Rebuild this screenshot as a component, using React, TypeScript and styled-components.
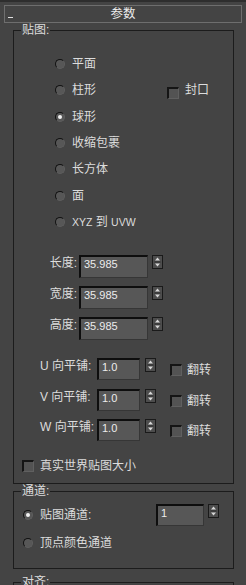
import React from "react";
import styled, { createGlobalStyle } from "styled-components";

const GlobalStyle = createGlobalStyle`
  html, body {
    margin: 0;
    padding: 0;
    background: #444444;
  }
  body {
    width: 246px;
    height: 585px;
    overflow: hidden;
    font-family: "Liberation Sans", "Noto Sans CJK SC", sans-serif;
    font-size: 12px;
    color: #dcdcdc;
  }
`;

const Page = styled.div`
  width: 246px;
  height: 585px;
  box-sizing: border-box;
  border-top: 2px solid #2e2e2e;
  padding-top: 3px;
  overflow: hidden;
`;

const RolloutHeader = styled.div`
  margin: 0 4px;
  height: 18px;
  box-sizing: border-box;
  border: 1px solid #6e6e6e;
  display: grid;
  grid-template-columns: 1fr auto 1fr;
  align-items: center;
`;

const Collapse = styled.span`
  width: 5px;
  height: 1px;
  margin: 6px 0 0 3px;
  background: #e0e0e0;
`;

const Title = styled.span`
  font-size: 12.5px;
  line-height: 14px;
  color: #ececec;
`;

const Group = styled.fieldset<{ $top?: number }>`
  margin: ${(p) => p.$top ?? 0}px 12px 0 13px;
  padding: 0;
  border: 1px solid #1c1c1c;
  min-inline-size: 0;
`;

const Legend = styled.legend`
  padding: 0 1px;
  margin-left: 7px;
  font-size: 12px;
  line-height: 14px;
  color: #dcdcdc;
`;

const Body = styled.div<{ $pad: string }>`
  display: flex;
  flex-direction: column;
  padding: ${(p) => p.$pad};
`;

const RadioList = styled.div`
  display: flex;
  flex-direction: column;
  padding-left: 41px;
`;

const RadioRow = styled.div<{ $h?: number }>`
  display: flex;
  align-items: center;
  height: ${(p) => p.$h ?? 26.3}px;
`;

const Radio = styled.span<{ $on?: boolean }>`
  flex: none;
  width: 10px;
  height: 10px;
  box-sizing: border-box;
  border-radius: 50%;
  border: 1px solid;
  border-color: #111 #5e5e5e #5e5e5e #111;
  background: #575757;
  display: inline-flex;
  align-items: center;
  justify-content: center;
  &::after {
    content: "";
    width: 4px;
    height: 4px;
    border-radius: 50%;
    background: ${(p) => (p.$on ? "#f2f2f2" : "transparent")};
  }
`;

const Text = styled.span<{ $gap?: number }>`
  margin-left: ${(p) => p.$gap ?? 7}px;
  line-height: 14px;
  white-space: nowrap;
`;

const Latin = styled.span`
  font-size: 10.5px;
`;

const Check = styled.span<{ $drop?: number }>`
  flex: none;
  width: 12px;
  height: 12px;
  box-sizing: border-box;
  border: 1px solid;
  border-width: 2px 1px 1px 2px;
  border-color: #151515 #606060 #606060 #151515;
  background: #535353;
  transform: translateY(${(p) => p.$drop ?? 0}px);
`;

const CapOption = styled.div`
  display: flex;
  align-items: center;
  margin-left: auto;
  margin-right: 24px;
`;

const DimList = styled.div`
  display: flex;
  flex-direction: column;
  gap: 8px;
  margin-top: 20px;
`;

const DimRow = styled.div`
  display: flex;
  align-items: flex-start;
  height: 23px;
`;

const DimLabel = styled.span<{ $w: number; $pad?: number }>`
  box-sizing: border-box;
  width: ${(p) => p.$w}px;
  padding-left: ${(p) => p.$pad ?? 0}px;
  padding-right: ${(p) => (p.$pad ? 0 : 2)}px;
  text-align: ${(p) => (p.$pad ? "left" : "right")};
  line-height: 16px;
  white-space: nowrap;
`;

const Field = styled.div<{ $w: number; $h: number }>`
  flex: none;
  width: ${(p) => p.$w}px;
  height: ${(p) => p.$h}px;
  box-sizing: border-box;
  border-style: solid;
  border-width: 2px 1px 1px 2px;
  border-color: #0e0e0e #363636 #363636 #0e0e0e;
  background: #575757;
  padding: 0 3px;
  font-family: "Liberation Sans", sans-serif;
  font-size: 11px;
  line-height: 15px;
  color: #ececec;
`;

const SpinBox = styled.div<{ $gap: number }>`
  flex: none;
  width: 11px;
  height: 14px;
  box-sizing: border-box;
  margin-left: ${(p) => p.$gap}px;
  border: 1px solid #1a1a1a;
  background: #4d4d4d;
  display: flex;
`;

const Spinner = ({ gap }: { gap: number }) => (
  <SpinBox $gap={gap}>
    <svg width="9" height="12" viewBox="0 0 9 12">
      <path d="M4.5 1.5 L7 4.5 L2 4.5 Z" fill="#d8d8d8" />
      <path d="M1.5 6 H7.5" stroke="#2a2a2a" strokeWidth="1" />
      <path d="M2 7.5 L7 7.5 L4.5 10.5 Z" fill="#d8d8d8" />
    </svg>
  </SpinBox>
);

const TileList = styled.div`
  display: flex;
  flex-direction: column;
  gap: 8.5px;
  margin-top: 18px;
`;

const TileRow = styled.div`
  display: flex;
  align-items: flex-start;
  height: 22px;
`;

const FlipOption = styled.div`
  display: flex;
  align-items: center;
  margin: 5px 0 0 14px;
`;

const WorldRow = styled.div`
  display: flex;
  align-items: center;
  height: 13px;
  margin-top: 18px;
  padding-left: 8px;
`;

const ChannelRow = styled.div<{ $top?: number }>`
  display: flex;
  align-items: center;
  height: 22px;
  margin-top: ${(p) => p.$top ?? 0}px;
`;

const ChannelField = styled.div`
  display: flex;
  align-items: flex-start;
  margin-left: auto;
  margin-right: 14px;
  height: 22px;
`;

const projections: { label: React.ReactNode; on?: boolean; cap?: boolean }[] = [
  { label: "平面" },
  { label: "柱形", cap: true },
  { label: "球形", on: true },
  { label: "收缩包裹" },
  { label: "长方体" },
  { label: "面" },
  {
    label: (
      <>
        <Latin>XYZ</Latin> 到 <Latin>UVW</Latin>
      </>
    ),
  },
];

const dims = ["长度:", "宽度:", "高度:"];
const tiles = ["U 向平铺:", "V 向平铺:", "W 向平铺:"];

export default function App() {
  return (
    <>
      <GlobalStyle />
      <Page>
        <RolloutHeader>
          <Collapse />
          <Title>参数</Title>
        </RolloutHeader>

        <Group>
          <Legend>贴图:</Legend>
          <Body $pad="14px 0 11px 0">
            <RadioList>
              {projections.map((p, i) => (
                <RadioRow key={i}>
                  <Radio $on={p.on} />
                  <Text>{p.label}</Text>
                  {p.cap && (
                    <CapOption>
                      <Check $drop={3} />
                      <Text $gap={6}>封口</Text>
                    </CapOption>
                  )}
                </RadioRow>
              ))}
            </RadioList>

            <DimList>
              {dims.map((d) => (
                <DimRow key={d}>
                  <DimLabel $w={65}>{d}</DimLabel>
                  <Field $w={69} $h={23}>35.985</Field>
                  <Spinner gap={4} />
                </DimRow>
              ))}
            </DimList>

            <TileList>
              {tiles.map((t) => (
                <TileRow key={t}>
                  <DimLabel $w={83} $pad={26}>{t}</DimLabel>
                  <Field $w={43} $h={22}>1.0</Field>
                  <Spinner gap={5} />
                  <FlipOption>
                    <Check />
                    <Text $gap={5}>翻转</Text>
                  </FlipOption>
                </TileRow>
              ))}
            </TileList>

            <WorldRow>
              <Check />
              <Text $gap={6}>真实世界贴图大小</Text>
            </WorldRow>
          </Body>
        </Group>

        <Group>
          <Legend>通道:</Legend>
          <Body $pad="6px 0 14px 9px">
            <ChannelRow>
              <Radio $on />
              <Text>贴图通道:</Text>
              <ChannelField>
                <Field $w={48} $h={22}>1</Field>
                <Spinner gap={4} />
              </ChannelField>
            </ChannelRow>
            <ChannelRow $top={6}>
              <Radio />
              <Text>顶点颜色通道</Text>
            </ChannelRow>
          </Body>
        </Group>

        <Group $top={6}>
          <Legend>对齐:</Legend>
          <Body $pad="10px 0 40px 9px" />
        </Group>
      </Page>
    </>
  );
}
